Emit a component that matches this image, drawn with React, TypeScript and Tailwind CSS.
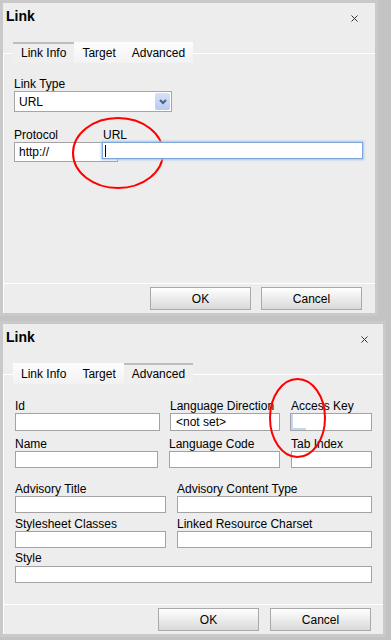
import type { ReactNode } from "react";

function CloseX() {
  return (
    <svg width="7" height="7" viewBox="0 0 7 7" className="block">
      <path d="M0.5 0.5 L6.5 6.5 M6.5 0.5 L0.5 6.5" stroke="#333" strokeWidth="1" />
    </svg>
  );
}

function Tab({ label, active }: { label: string; active?: boolean }) {
  return (
    <div
      className={
        active
          ? "relative z-10 h-[21px] px-[8px] pt-[2px] border-t-2 border-[#bdbdbd] bg-[#efefef] text-[12px] leading-[14px]"
          : "relative z-10 h-[21px] px-[8px] pt-[4px] bg-linear-to-b from-[#fdfdfd] to-[#f2f2f2] text-[12px] leading-[14px]"
      }
    >
      {label}
    </div>
  );
}

function Btn({ label }: { label: string }) {
  return (
    <div className="w-[101px] h-[23px] flex items-center justify-center border border-[#a9a9a9] bg-linear-to-b from-[#ffffff] to-[#d9d9d9] text-[12px] leading-[14px]">
      {label}
    </div>
  );
}

function Field({ className }: { className: string }) {
  return <div className={"border border-[#a3a3a3] bg-white " + className} />;
}

function Dialog({
  width,
  closeMr,
  active,
  gap,
  padR,
  children,
}: {
  width: string;
  closeMr: string;
  active: string;
  gap: string;
  padR: string;
  children: ReactNode;
}) {
  return (
    <div className={"h-[316px] shrink-0 flex flex-col border-[3px] border-[#c9c9c9] bg-[#ededed] " + width}>
      {/* title */}
      <div className="h-[39px] flex justify-between">
        <div className="pl-[3px] pt-[5px] text-[14px] leading-[16px] font-bold">Link</div>
        <div className={"mt-[12px] " + closeMr}>
          <CloseX />
        </div>
      </div>
      {/* tabs */}
      <div className="flex pl-[10px]">
        {["Link Info", "Target", "Advanced"].map((t) => (
          <Tab key={t} label={t} active={t === active} />
        ))}
      </div>
      <div className="-mt-[10px] flex-1 flex flex-col border-l border-white">
        <div className="flex-1 border-t border-white">{children}</div>
        <div className={"h-[30px] border-t border-white pt-[3px] flex justify-end " + gap + " " + padR}>
          <Btn label="OK" />
          <Btn label="Cancel" />
        </div>
      </div>
    </div>
  );
}

export default function App() {
  return (
    <div className="relative w-[391px] h-[640px] overflow-hidden bg-[#c3c3c3] text-black font-['Liberation_Sans',Arial,sans-serif] flex flex-col gap-[5px]">
      {/* Link Info tab */}
      <Dialog width="w-[378px]" closeMr="mr-[17px]" active="Link Info" gap="gap-[10px]" padR="pr-[13px]">
        <div className="pl-[10px] pt-[23px]">
          <div className="text-[12px] leading-[14px]">Link Type</div>
          <div className="w-[158px] h-[21px] border border-[#a5a5a5] bg-white flex items-center justify-between pl-[4px] pr-[1px]">
            <span className="text-[12px] leading-[14px]">URL</span>
            <div className="w-[15px] h-[17px] bg-linear-to-b from-[#d6e2f8] to-[#b7cbf2] rounded-[2px] flex items-center justify-center">
              <svg width="8" height="6" viewBox="0 0 8 6">
                <path d="M1 1 L4 4 L7 1" fill="none" stroke="#4d6185" strokeWidth="2" />
              </svg>
            </div>
          </div>
          <div className="mt-[16px] flex">
            <div className="w-[104px] shrink-0">
              <div className="text-[12px] leading-[14px]">Protocol</div>
              <div className="h-[20px] border border-[#a3a3a3] bg-white pl-[4px] text-[12px] leading-[18px]">http://</div>
            </div>
            <div className="relative z-10 -ml-[16px] w-[261px]">
              <div className="pl-[1px] text-[12px] leading-[14px]">URL</div>
              <div className="h-[17px] border border-[#7ea6d9] bg-white shadow-[0_0_2px_1px_#a9c4e8] flex items-center pl-[2px]">
                <div className="w-px h-[12px] bg-black" />
              </div>
            </div>
          </div>
        </div>
      </Dialog>

      {/* Advanced tab */}
      <Dialog width="w-[386px]" closeMr="mr-[15px]" active="Advanced" gap="gap-[11px]" padR="pr-[12px]">
        <div className="pl-[11px] pt-[24px] text-[12px] leading-[14px]">
          <div className="flex">
            <div className="w-[145px]">
              <div>Id</div>
              <Field className="h-[18px]" />
            </div>
            <div className="ml-[10px] w-[110px]">
              <div className="whitespace-nowrap">Language Direction</div>
              <div className="h-[18px] border border-[#a3a3a3] bg-white pl-[5px] leading-[16px]">&lt;not set&gt;</div>
            </div>
            <div className="ml-[10px] w-[82px]">
              <div className="pl-[1px]">Access Key</div>
              <div className="h-[18px] border border-[#a3a3a3] bg-white">
                <div className="w-[15px] h-[16px] border-l-2 border-b-2 border-[#c6d6f2]" />
              </div>
            </div>
          </div>
          <div className="mt-[6px] flex">
            <div className="w-[143px]">
              <div>Name</div>
              <Field className="h-[17px]" />
            </div>
            <div className="ml-[11px] w-[111px]">
              <div>Language Code</div>
              <Field className="h-[17px]" />
            </div>
            <div className="ml-[11px] w-[81px]">
              <div>Tab Index</div>
              <Field className="h-[17px]" />
            </div>
          </div>
          <div className="mt-[14px] flex">
            <div className="w-[151px]">
              <div>Advisory Title</div>
              <Field className="h-[17px]" />
            </div>
            <div className="ml-[11px] w-[195px]">
              <div>Advisory Content Type</div>
              <Field className="h-[17px]" />
            </div>
          </div>
          <div className="mt-[4px] flex">
            <div className="w-[151px]">
              <div>Stylesheet Classes</div>
              <Field className="h-[17px]" />
            </div>
            <div className="ml-[11px] w-[195px]">
              <div>Linked Resource Charset</div>
              <Field className="h-[17px]" />
            </div>
          </div>
          <div className="mt-[3px] w-[357px]">
            <div className="pb-[1px]">Style</div>
            <Field className="h-[17px]" />
          </div>
        </div>
      </Dialog>

      {/* hand-drawn highlight rings */}
      <svg className="pointer-events-none absolute left-0 top-0" width="391" height="640">
        <ellipse cx="118" cy="153" rx="45" ry="35" fill="none" stroke="#ff0000" strokeWidth="2" />
        <ellipse cx="297.5" cy="418" rx="27.5" ry="39" fill="none" stroke="#ff0000" strokeWidth="2" />
      </svg>
    </div>
  );
}
